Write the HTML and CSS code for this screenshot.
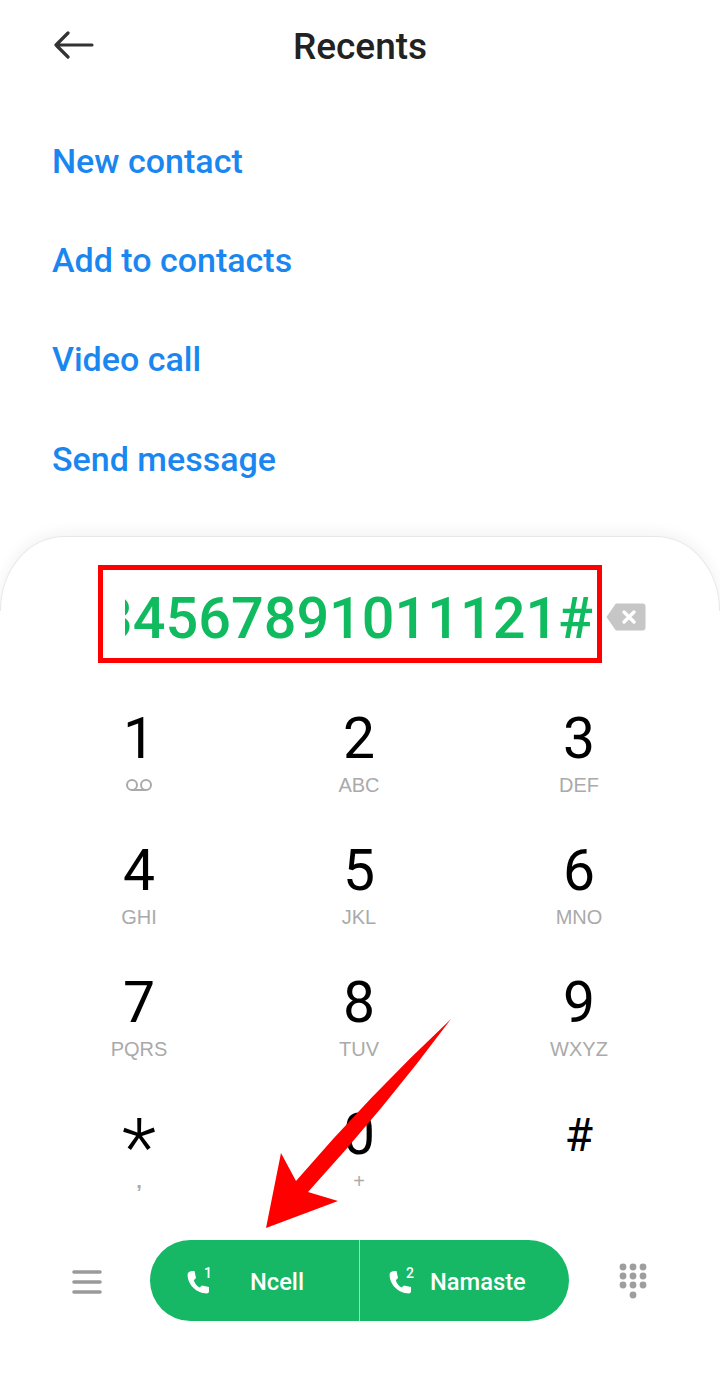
FILE: index.html
```html
<!DOCTYPE html>
<html lang="en">
<head>
  <meta charset="UTF-8">
  <title>Recents</title>
  <link rel="stylesheet" href="styles.css">
</head>
<body>

<div class="screen">
  <header class="topbar">
    <svg class="back" viewBox="0 0 40 28" width="40" height="28">
      <path d="M14 2 L2 14 L14 26 M2 14 H38" fill="none" stroke="#333" stroke-width="3.2" stroke-linecap="round" stroke-linejoin="round"/>
    </svg>
    <h1>Recents</h1>
  </header>

  <ul class="actions">
    <li>New contact</li>
    <li>Add to contacts</li>
    <li>Video call</li>
    <li>Send message</li>
  </ul>

  <section class="dialer">
    <div class="number-row">
      <div class="number-box">
        <div class="number-clip"><span>1234567891011121#</span></div>
      </div>
      <svg class="backspace" viewBox="0 0 40 28" width="40" height="28">
        <path d="M10 1 H37 Q39 1 39 3 V25 Q39 27 37 27 H10 L1 14 Z" fill="#c6c6c6" stroke="#c6c6c6" stroke-linejoin="round"/>
        <path d="M18 9 L28 19 M28 9 L18 19" stroke="#fff" stroke-width="3.4" stroke-linecap="round"/>
      </svg>
    </div>

    <div class="keypad">
      <div class="key"><span class="digit">1</span>
        <span class="sub">
          <svg viewBox="0 0 28 14" width="28" height="14">
            <circle cx="7" cy="7" r="5" fill="none" stroke="#aaa" stroke-width="2"/>
            <circle cx="21" cy="7" r="5" fill="none" stroke="#aaa" stroke-width="2"/>
            <path d="M7 12 H21" stroke="#aaa" stroke-width="2"/>
          </svg>
        </span>
      </div>
      <div class="key"><span class="digit">2</span><span class="sub">ABC</span></div>
      <div class="key"><span class="digit">3</span><span class="sub">DEF</span></div>
      <div class="key"><span class="digit">4</span><span class="sub">GHI</span></div>
      <div class="key"><span class="digit">5</span><span class="sub">JKL</span></div>
      <div class="key"><span class="digit">6</span><span class="sub">MNO</span></div>
      <div class="key"><span class="digit">7</span><span class="sub">PQRS</span></div>
      <div class="key"><span class="digit">8</span><span class="sub">TUV</span></div>
      <div class="key"><span class="digit">9</span><span class="sub">WXYZ</span></div>
      <div class="key"><span class="digit star">*</span><span class="sub comma">,</span></div>
      <div class="key"><span class="digit">0</span><span class="sub">+</span></div>
      <div class="key"><span class="digit hash">#</span></div>
    </div>

    <div class="callbar">
      <svg class="menu" viewBox="0 0 30 26" width="30" height="26">
        <path d="M2 3 H28 M2 13 H28 M2 23 H28" stroke="#9a9a9a" stroke-width="3.6" stroke-linecap="round"/>
      </svg>

      <div class="sim-pill">
        <div class="sim sim-one">
          <span class="sim-icon">
            <svg viewBox="0 0 24 24" width="24" height="24"><path fill="#fff" d="M3 2 Q5 0.5 8.5 1 L10 8 L7.8 10.2 C8.8 13.6 10.6 15.8 13.6 17.4 L16 15.4 L23 17 V21.6 Q23 23.4 21 23.4 C10 23.2 1.4 14 1.6 4.4 Q1.6 3 3 2 Z"/></svg>
            <sup>1</sup>
          </span>
          <span>Ncell</span>
        </div>
        <div class="sim sim-two">
          <span class="sim-icon">
            <svg viewBox="0 0 24 24" width="24" height="24"><path fill="#fff" d="M3 2 Q5 0.5 8.5 1 L10 8 L7.8 10.2 C8.8 13.6 10.6 15.8 13.6 17.4 L16 15.4 L23 17 V21.6 Q23 23.4 21 23.4 C10 23.2 1.4 14 1.6 4.4 Q1.6 3 3 2 Z"/></svg>
            <sup>2</sup>
          </span>
          <span>Namaste</span>
        </div>
      </div>

      <svg class="dots" viewBox="0 0 28 36" width="28" height="36" fill="#9e9e9e">
        <circle cx="4" cy="4" r="3.4"/><circle cx="14" cy="4" r="3.4"/><circle cx="24" cy="4" r="3.4"/>
        <circle cx="4" cy="13" r="3.4"/><circle cx="14" cy="13" r="3.4"/><circle cx="24" cy="13" r="3.4"/>
        <circle cx="4" cy="22" r="3.4"/><circle cx="14" cy="22" r="3.4"/><circle cx="24" cy="22" r="3.4"/>
        <circle cx="14" cy="32" r="3.4"/>
      </svg>
    </div>
  </section>

  <!-- flecha roja encima del teclado -->
  <svg class="red-arrow" viewBox="0 0 720 1400" width="720" height="1400">
    <path d="M451 1019 Q384 1109 308 1192 L338 1201 L266 1228 L281 1153 L296 1181 Q369 1096 451 1019 Z" fill="#ff0000"/>
  </svg>
</div>

</body>
</html>
```

FILE: styles.css
```css
* {
  box-sizing: border-box;
}
body {
  margin: 0;
  background-color: #fff;
  font-family: Roboto, "Liberation Sans", sans-serif;
}
.screen {
  position: relative;
  width: 720px;
  height: 1400px;
  overflow: hidden;
  background-color: #fff;
}
.topbar {
  position: relative;
  height: 93px;
  display: flex;
  align-items: center;
  justify-content: center;
}
.topbar h1 {
  margin: 0;
  font-size: 37px;
  font-weight: 500;
  color: #222;
}
.back {
  position: absolute;
  left: 54px;
  top: 31px;
}
.actions {
  list-style-type: none;
  margin: 0;
  padding: 19px 0 0 52px;
  height: 443px;
}
.actions li {
  height: 99.2px;
  line-height: 99px;
  font-size: 34px;
  font-weight: 500;
  color: #1a87f0;
}
.dialer {
  position: relative;
  height: 864px;
  background-color: #fff;
  border: 1px solid #e8e8e8;
  border-bottom: none;
  border-radius: 64px 64px 0 0 / 74px 74px 0 0;
  box-shadow: 0 -4px 14px rgba(0, 0, 0, 0.05);
}
/* tapa el borde lateral debajo de las esquinas */
.dialer::before,
.dialer::after {
  content: "";
  position: absolute;
  top: 74px;
  bottom: 0;
  width: 2px;
  background-color: #fff;
}
.dialer::before {
  left: -1px;
}
.dialer::after {
  right: -1px;
}
.number-row {
  display: flex;
  align-items: center;
  gap: 4px;
  padding: 28px 0 0 97px;
}
.number-box {
  width: 504px;
  height: 98px;
  border: 5px solid #ff0000;
  padding: 8px 4px 0 22px;
  display: flex;
  align-items: center;
}
.number-clip {
  width: 100%;
  overflow: hidden;
  display: flex;
  justify-content: flex-end;
  white-space: nowrap;
  font-size: 57.6px;
  font-weight: 500;
  color: #10ba5f;
}
.number-clip span {
  flex-shrink: 0;
}
.backspace {
  margin-top: 5px;
}
.keypad {
  display: grid;
  grid-template-columns: repeat(3, 220px);
  grid-auto-rows: 132.1px;
  padding: 40px 0 0 28px;
}
.key {
  display: flex;
  flex-direction: column;
  align-items: center;
  color: #000;
}
.digit {
  height: 66px;
  line-height: 66px;
  margin-top: 3px;
  font-size: 57px;
  font-weight: 370;
}
.sub {
  height: 26px;
  line-height: 26px;
  font-family: "Liberation Sans", sans-serif;
  font-size: 20px;
  color: #aaa;
}
.sub svg {
  display: block;
  margin-top: 6px;
}
.comma {
  font-weight: 700;
}
.star {
  font-size: 80px;
  font-weight: 350;
  line-height: 92px;
}
.hash {
  font-size: 46px;
  font-weight: 400;
}
.callbar {
  display: flex;
  align-items: center;
  padding-left: 71px;
  margin-top: 9px;
}
.menu {
  flex-shrink: 0;
  margin-top: 3px;
}
.sim-pill {
  width: 419px;
  height: 81px;
  margin-left: 48px;
  display: flex;
  background-color: #16b765;
  border-radius: 41px;
  color: #fff;
  font-size: 23.7px;
  font-weight: 500;
}
.sim {
  display: flex;
  align-items: center;
  padding-top: 3px;
}
.sim-one {
  width: 210px;
  padding-left: 36px;
  gap: 40px;
  border-right: 1px solid #9fdcbc;
}
.sim-two {
  padding-left: 28px;
  gap: 18px;
}
.sim-icon {
  position: relative;
  width: 24px;
  height: 24px;
}
.sim-icon svg {
  display: block;
}
.sim-icon sup {
  position: absolute;
  right: -2px;
  top: -4px;
  font-size: 14px;
  line-height: 14px;
  font-weight: 500;
}
.dots {
  margin-left: 50px;
}
.red-arrow {
  position: absolute;
  left: 0;
  top: 0;
}
```
